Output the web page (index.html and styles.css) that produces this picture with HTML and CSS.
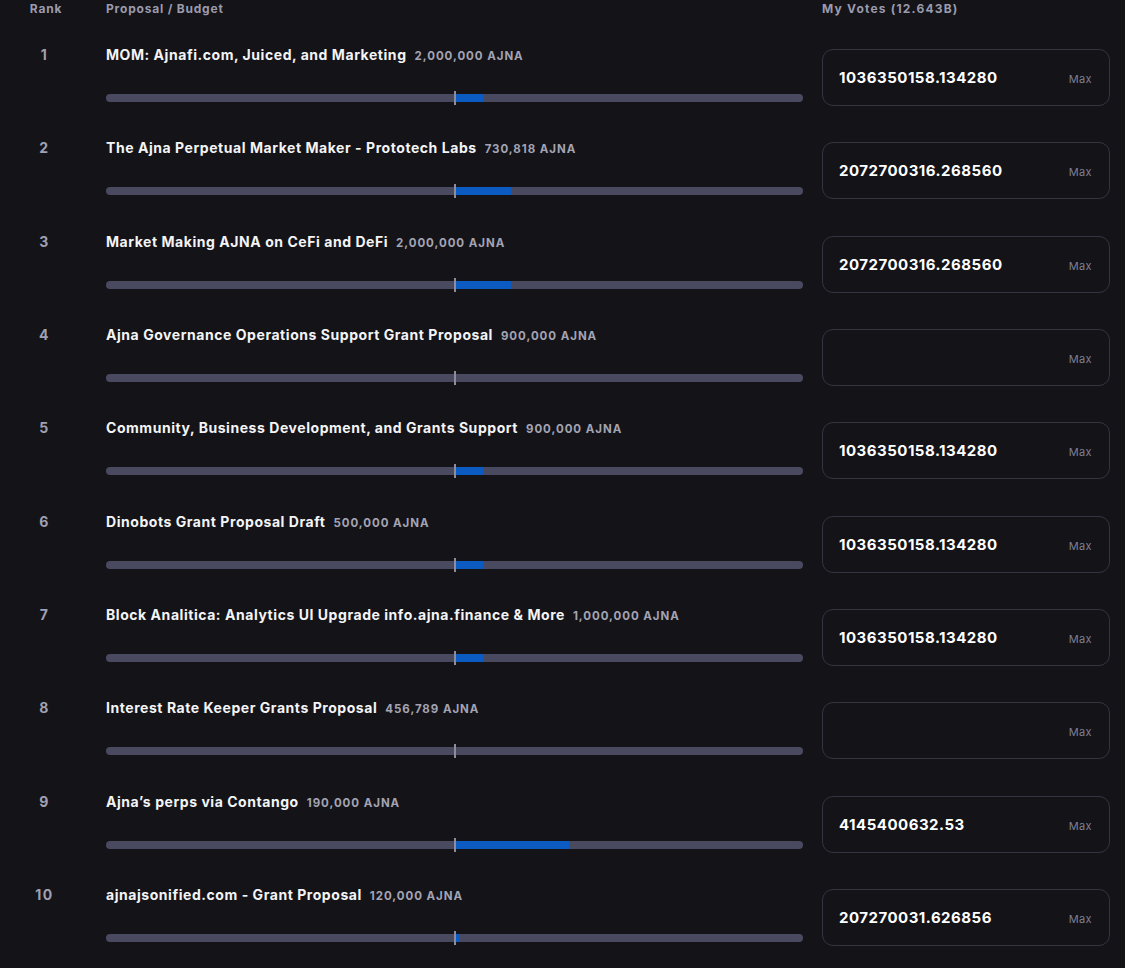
FILE: index.html
```html
<!DOCTYPE html>
<html lang="en">
<head>
<meta charset="utf-8">
<title>Ajna Grants Voting</title>
<link rel="stylesheet" href="styles.css">
</head>
<body>
<div class="table">
  <div class="head">
    <div class="h-rank">Rank</div>
    <div class="h-prop">Proposal / Budget</div>
    <div class="h-votes">My Votes (12.643B)</div>
  </div>
  <div class="rows">
    <div class="row">
      <div class="rank">1</div>
      <div class="prop">
        <div class="title"><span class="name">MOM: Ajnafi.com, Juiced, and Marketing</span><span class="budget">2,000,000 AJNA</span></div>
        <div class="bar"><div class="fill" style="width:28px"></div><div class="mid"></div></div>
      </div>
      <div class="vote"><span class="num">1036350158.134280</span><span class="max">Max</span></div>
    </div>
    <div class="row">
      <div class="rank">2</div>
      <div class="prop">
        <div class="title"><span class="name">The Ajna Perpetual Market Maker - Prototech Labs</span><span class="budget">730,818 AJNA</span></div>
        <div class="bar"><div class="fill" style="width:56px"></div><div class="mid"></div></div>
      </div>
      <div class="vote"><span class="num">2072700316.268560</span><span class="max">Max</span></div>
    </div>
    <div class="row">
      <div class="rank">3</div>
      <div class="prop">
        <div class="title"><span class="name">Market Making AJNA on CeFi and DeFi</span><span class="budget">2,000,000 AJNA</span></div>
        <div class="bar"><div class="fill" style="width:56px"></div><div class="mid"></div></div>
      </div>
      <div class="vote"><span class="num">2072700316.268560</span><span class="max">Max</span></div>
    </div>
    <div class="row">
      <div class="rank">4</div>
      <div class="prop">
        <div class="title"><span class="name">Ajna Governance Operations Support Grant Proposal</span><span class="budget">900,000 AJNA</span></div>
        <div class="bar"><div class="mid"></div></div>
      </div>
      <div class="vote"><span class="num"></span><span class="max">Max</span></div>
    </div>
    <div class="row">
      <div class="rank">5</div>
      <div class="prop">
        <div class="title"><span class="name">Community, Business Development, and Grants Support</span><span class="budget">900,000 AJNA</span></div>
        <div class="bar"><div class="fill" style="width:28px"></div><div class="mid"></div></div>
      </div>
      <div class="vote"><span class="num">1036350158.134280</span><span class="max">Max</span></div>
    </div>
    <div class="row">
      <div class="rank">6</div>
      <div class="prop">
        <div class="title"><span class="name">Dinobots Grant Proposal Draft</span><span class="budget">500,000 AJNA</span></div>
        <div class="bar"><div class="fill" style="width:28px"></div><div class="mid"></div></div>
      </div>
      <div class="vote"><span class="num">1036350158.134280</span><span class="max">Max</span></div>
    </div>
    <div class="row">
      <div class="rank">7</div>
      <div class="prop">
        <div class="title"><span class="name">Block Analitica: Analytics UI Upgrade info.ajna.finance &amp; More</span><span class="budget">1,000,000 AJNA</span></div>
        <div class="bar"><div class="fill" style="width:28px"></div><div class="mid"></div></div>
      </div>
      <div class="vote"><span class="num">1036350158.134280</span><span class="max">Max</span></div>
    </div>
    <div class="row">
      <div class="rank">8</div>
      <div class="prop">
        <div class="title"><span class="name">Interest Rate Keeper Grants Proposal</span><span class="budget">456,789 AJNA</span></div>
        <div class="bar"><div class="mid"></div></div>
      </div>
      <div class="vote"><span class="num"></span><span class="max">Max</span></div>
    </div>
    <div class="row">
      <div class="rank">9</div>
      <div class="prop">
        <div class="title"><span class="name">Ajna’s perps via Contango</span><span class="budget">190,000 AJNA</span></div>
        <div class="bar"><div class="fill" style="width:114px"></div><div class="mid"></div></div>
      </div>
      <div class="vote"><span class="num">4145400632.53</span><span class="max">Max</span></div>
    </div>
    <div class="row">
      <div class="rank">10</div>
      <div class="prop">
        <div class="title"><span class="name">ajnajsonified.com - Grant Proposal</span><span class="budget">120,000 AJNA</span></div>
        <div class="bar"><div class="fill" style="width:4px"></div><div class="mid"></div></div>
      </div>
      <div class="vote"><span class="num">207270031.626856</span><span class="max">Max</span></div>
    </div>
  </div>
</div>
</body>
</html>
```
FILE: styles.css
```css
html, body {
  margin: 0;
  padding: 0;
  background: #131318;
}
body {
  font-family: Inter, "Liberation Sans", sans-serif;
  color: #f2f2f4;
  height: 968px;
  overflow: hidden;
}
.table {
  width: 1110px;
}
.head, .row {
  display: grid;
  grid-template-columns: 87px 697px 288px;
  column-gap: 19px;
}
.head {
  height: 18px;
  line-height: 18px;
  font-size: 12px;
  font-weight: 700;
  color: #9b9bad;
  letter-spacing: 0.8px;
}
.h-rank {
  width: 92px;
  text-align: center;
}
.h-votes {
  letter-spacing: 1.2px;
}
.rows {
  padding-top: 19px;
}
.row {
  height: 93.33px;
  box-sizing: border-box;
}
.rank {
  width: 89px;
  text-align: center;
  padding-top: 8px;
  line-height: 20px;
  font-size: 14px;
  font-weight: 700;
  letter-spacing: 1.5px;
  color: #a0a0b3;
}
.prop {
  padding-top: 8px;
}
.title {
  display: flex;
  align-items: baseline;
  gap: 8px;
  line-height: 20px;
  white-space: nowrap;
}
.name {
  font-size: 14px;
  font-weight: 700;
  color: #f4f4f6;
  letter-spacing: 0.55px;
}
.budget {
  font-size: 11.5px;
  font-weight: 700;
  color: #a3a3b3;
  letter-spacing: 0.95px;
}
.bar {
  position: relative;
  margin-top: 28px;
  height: 8px;
  border-radius: 4px;
  background: #494a5f;
}
.fill {
  position: absolute;
  left: 50%;
  top: 0;
  height: 8px;
  background: #0b5bc3;
}
.mid {
  position: absolute;
  left: calc(50% - 1px);
  top: -3px;
  width: 2px;
  height: 14px;
  background: #8c8c9e;
}
.vote {
  margin-top: 12px;
  height: 57px;
  box-sizing: border-box;
  border: 1px solid #34343f;
  border-radius: 11px;
  display: flex;
  align-items: center;
  justify-content: space-between;
  padding: 0 17px 0 16px;
}
.num {
  font-size: 15px;
  font-weight: 700;
  color: #ffffff;
  letter-spacing: 0.5px;
}
.max {
  font-size: 11px;
  font-weight: 400;
  color: #7f7f92;
  padding-top: 3px;
  letter-spacing: 0.4px;
}
```
